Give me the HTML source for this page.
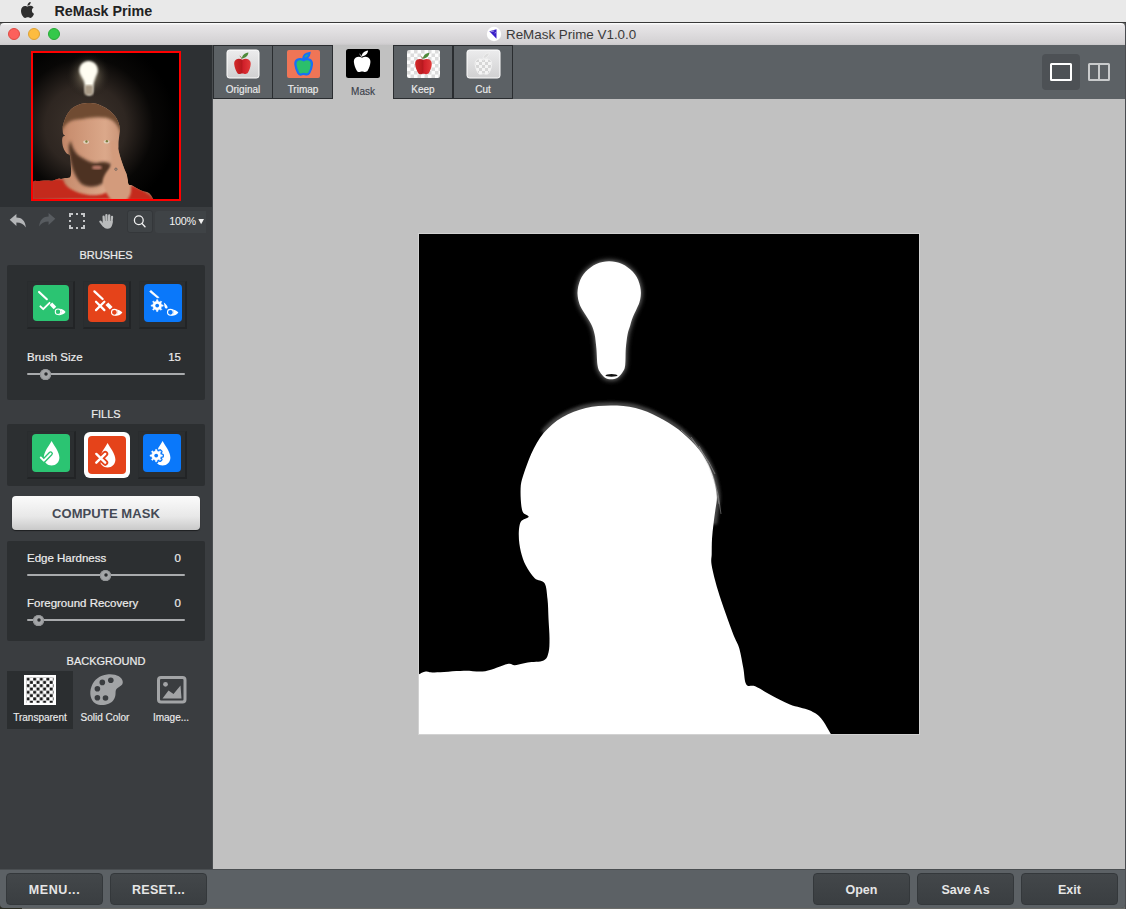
<!DOCTYPE html>
<html><head><meta charset="utf-8">
<style>
*{margin:0;padding:0;box-sizing:border-box}
html,body{width:1126px;height:909px;overflow:hidden;background:#6a6b68;font-family:"Liberation Sans",sans-serif}
.a{position:absolute}
.tl{width:12px;height:12px;border-radius:50%;top:28px}
.panel{background:#2c2f31;border-radius:2px}
.lbl{color:#ececec;font-size:11.5px;white-space:nowrap;line-height:14px;-webkit-text-stroke:0.2px #ececec}
.hdr{color:#ececec;font-size:11px;white-space:nowrap;text-align:center;line-height:14px;-webkit-text-stroke:0.2px #ececec}
.tab{top:46px;height:52px;background:#5c6165}
.tabl{top:83px;text-align:center;font-size:10px;color:#ececec;line-height:13px;-webkit-text-stroke:0.15px currentColor}
.frame{background:#2b2e30;border:1px solid #292c2e;border-right:2px solid #222426;border-bottom:2px solid #222426}
.track{height:2px;background:#a9abad;border-radius:1px}
.knob{width:11px;height:11px;border-radius:50%;background:#a4a6a8;box-shadow:inset 0 0 0 1px #939597}
.knob::after{content:"";position:absolute;left:3.5px;top:3.5px;width:4px;height:4px;border-radius:50%;background:radial-gradient(circle,#2a2c2e 0,#2a2c2e 1.2px,#7f8183 2px)}
.bgl{top:711px;text-align:center;font-size:10px;color:#ececec;line-height:13px;-webkit-text-stroke:0.15px #ececec}
.bbtn{background:linear-gradient(#43474a,#3a3e41);border-radius:4px;border:1px solid #34383b;color:#e6e6e6;font-weight:bold;font-size:12.5px;text-align:center;line-height:32px}
</style></head><body>
<div class="a" style="left:0;top:896px;width:22px;height:13px;background:#2b2c22"></div>
<div class="a" style="left:1125px;top:23px;width:1px;height:886px;background:#4a4c50"></div>
<!-- menubar -->
<div class="a" style="left:0;top:0;width:1126px;height:22px;background:#e9e9e9"></div>
<svg class="a" style="left:21px;top:2px" width="13" height="16" viewBox="0 0 814 1000"><path d="M788.1 340.9c-5.8 4.5-108.2 62.2-108.2 190.5 0 148.4 130.3 200.9 134.2 202.2-.6 3.2-20.7 71.9-68.7 141.9-42.8 61.6-87.5 123.1-155.5 123.1s-85.5-39.5-164-39.5c-76.5 0-103.7 40.8-165.9 40.8s-105.6-57-155.5-127C46.7 790.7 0 663 0 541.8c0-194.4 126.4-297.5 250.8-297.5 66.1 0 121.2 43.4 162.7 43.4 39.5 0 101.1-46 176.3-46 28.5 0 130.9 2.6 198.3 99.2zm-234-181.5c31.1-36.9 53.1-88.1 53.1-139.3 0-7.1-.6-14.3-1.9-20.1-50.6 1.9-110.8 33.7-147.1 75.8-28.5 32.4-55.1 83.6-55.1 135.5 0 7.8 1.3 15.6 1.9 18.1 3.2.6 8.4 1.3 13.6 1.3 45.4 0 102.5-30.4 135.5-71.3z" fill="#2e2e2e"/></svg>
<div class="a" style="left:54.5px;top:3px;font-weight:bold;font-size:14.3px;color:#222;line-height:17px">ReMask Prime</div>
<div class="a" style="left:0;top:22px;width:1126px;height:1px;background:#383838"></div>
<!-- window -->
<div class="a" style="left:0;top:23px;width:1125px;height:885px;background:#3a3d40;border-radius:4px 4px 4px 4px"></div>
<div class="a" style="left:0;top:23px;width:1125px;height:22px;background:linear-gradient(#fbfbfb 0,#fbfbfb 1px,#e8e6e8 2px,#d3d1d3 20px,#c9c7c9 22px);border-radius:4px 4px 0 0"></div>
<div class="a tl" style="left:8px;background:#fc605c;border:1px solid #de4a43"></div>
<div class="a tl" style="left:28px;background:#fdbc40;border:1px solid #dea134"></div>
<div class="a tl" style="left:48px;background:#34c84a;border:1px solid #27aa35"></div>
<svg class="a" style="left:486px;top:26px" width="16" height="16" viewBox="0 0 16 16"><circle cx="8" cy="8" r="7.2" fill="#fff"/><path d="M3.3,5.3 L10.5,3.3 L10.5,12.7Z" fill="#3a1fc8"/><path d="M4.5,5.6 L8.2,5.0 M8.6,7.2 L10,6.4" stroke="#fff" stroke-width="0.7" opacity="0.7"/></svg>
<div class="a" style="left:506px;top:26px;font-size:13.4px;color:#3a3a3a;line-height:17px">ReMask Prime V1.0.0</div>
<!-- sidebar -->
<div class="a" style="left:0;top:45px;width:212px;height:162px;background:#2d3033"></div>
<div class="a" style="left:212px;top:45px;width:1px;height:824px;background:#4a4d50"></div>
<!-- tabbar -->
<div class="a" style="left:213px;top:45px;width:912px;height:54px;background:#5c6165"></div>
<!--TABS-->
<svg width="0" height="0" style="position:absolute"><defs>
<linearGradient id="appleg" x1="0" x2="1" y1="0" y2="0"><stop offset="0" stop-color="#d42a2a"/><stop offset="0.45" stop-color="#b81a1f"/><stop offset="0.55" stop-color="#d0202a"/><stop offset="1" stop-color="#e23a3a"/></linearGradient>
<linearGradient id="iconbg" x1="0" x2="0" y1="0" y2="1"><stop offset="0" stop-color="#ececed"/><stop offset="1" stop-color="#d0d0d1"/></linearGradient>
<pattern id="chk" width="7" height="7" patternUnits="userSpaceOnUse" x="1" y="1"><rect width="7" height="7" fill="#fdfdfd"/><rect width="3.5" height="3.5" fill="#dcdcdc"/><rect x="3.5" y="3.5" width="3.5" height="3.5" fill="#dcdcdc"/></pattern>
<pattern id="chk2" width="6" height="6" patternUnits="userSpaceOnUse"><rect width="6" height="6" fill="#f6f6f6"/><rect width="3" height="3" fill="#d6d6d6"/><rect x="3" y="3" width="3" height="3" fill="#d6d6d6"/></pattern>
</defs></svg>
<div class="a" style="left:213px;top:45px;width:300px;height:54px;background:#2a2d30"></div>
<div class="a tab" style="left:214px;width:58px"></div>
<div class="a tab" style="left:273px;width:59px"></div>
<div class="a" style="left:333px;top:45px;width:60px;height:54px;background:#c1c1c1"></div>
<div class="a tab" style="left:394px;width:58px"></div>
<div class="a tab" style="left:454px;width:58px"></div>
<svg class="a" style="left:226px;top:49px" width="34" height="30" viewBox="0 0 34 30">
 <rect x="1" y="1" width="32" height="28" rx="2.5" fill="url(#iconbg)" stroke="#fff" stroke-width="1"/>
 <path d="M16.3,10C14.5,8.8 12,8.6 10.2,9.6C8.5,10.6 8,12.5 8.2,14.5C8.5,17.5 9.8,20.5 11,22.8C11.8,24.4 13.5,24.5 14.8,24C15.8,23.6 17,23.6 18,24C19.5,24.5 21.2,24.3 22,22.8C23.3,20.5 24.5,17.5 24.7,14.5C24.9,12.5 24.2,10.6 22.5,9.6C20.7,8.6 18.2,8.8 16.3,10Z" fill="url(#appleg)" transform="translate(0,0.8)"/>
 <path d="M15.9,8.6C16.1,5.6 18.6,3.1 22.4,2.7C22.1,5.9 19.6,8.4 15.9,8.6Z" fill="#4f8a3a" transform="translate(0,0.8)"/><path d="M15.9,9.4C15.7,8 15,7 13.8,6.3" stroke="#8a6a40" stroke-width="0.9" fill="none" transform="translate(0,0.8)"/>
</svg>
<svg class="a" style="left:286px;top:49px" width="35" height="30" viewBox="0 0 35 30">
 <rect x="1" y="1" width="33" height="28" rx="2" fill="#f07556"/>
 <path d="M16.3,10C14.5,8.8 12,8.6 10.2,9.6C8.5,10.6 8,12.5 8.2,14.5C8.5,17.5 9.8,20.5 11,22.8C11.8,24.4 13.5,24.5 14.8,24C15.8,23.6 17,23.6 18,24C19.5,24.5 21.2,24.3 22,22.8C23.3,20.5 24.5,17.5 24.7,14.5C24.9,12.5 24.2,10.6 22.5,9.6C20.7,8.6 18.2,8.8 16.3,10Z" fill="#2bbf6c" stroke="#1770f5" stroke-width="2.2" transform="translate(1.2,1.2)"/>
 <path d="M15.9,8.6C16.1,5.6 18.6,3.1 22.4,2.7C22.1,5.9 19.6,8.4 15.9,8.6Z" fill="#2bbf6c" stroke="#1770f5" stroke-width="2" transform="translate(1.2,1.2)"/>
</svg>
<svg class="a" style="left:346px;top:49px" width="34" height="29" viewBox="0 0 34 29">
 <rect x="0" y="0" width="34" height="29" rx="2.5" fill="#000"/>
 <path d="M16.3,10C14.5,8.8 12,8.6 10.2,9.6C8.5,10.6 8,12.5 8.2,14.5C8.5,17.5 9.8,20.5 11,22.8C11.8,24.4 13.5,24.5 14.8,24C15.8,23.6 17,23.6 18,24C19.5,24.5 21.2,24.3 22,22.8C23.3,20.5 24.5,17.5 24.7,14.5C24.9,12.5 24.2,10.6 22.5,9.6C20.7,8.6 18.2,8.8 16.3,10Z" fill="#fff" transform="translate(-0.3,-1.2)"/>
 <path d="M15.9,8.6C16.1,5.6 18.6,3.1 22.4,2.7C22.1,5.9 19.6,8.4 15.9,8.6Z" fill="#fff" transform="translate(-0.3,-1.2)"/><path d="M15.9,9.4C15.7,8 15,7 13.8,6.3" stroke="#ddd" stroke-width="0.9" fill="none" transform="translate(-0.3,-1.2)"/>
</svg>
<svg class="a" style="left:406px;top:49px" width="35" height="30" viewBox="0 0 35 30">
 <rect x="1" y="1" width="33" height="28" rx="2" fill="url(#chk)"/>
 <path d="M16.3,10C14.5,8.8 12,8.6 10.2,9.6C8.5,10.6 8,12.5 8.2,14.5C8.5,17.5 9.8,20.5 11,22.8C11.8,24.4 13.5,24.5 14.8,24C15.8,23.6 17,23.6 18,24C19.5,24.5 21.2,24.3 22,22.8C23.3,20.5 24.5,17.5 24.7,14.5C24.9,12.5 24.2,10.6 22.5,9.6C20.7,8.6 18.2,8.8 16.3,10Z" fill="url(#appleg)" transform="translate(1,1)"/>
 <path d="M15.9,8.6C16.1,5.6 18.6,3.1 22.4,2.7C22.1,5.9 19.6,8.4 15.9,8.6Z" fill="#4f8a3a" transform="translate(1,1)"/><path d="M15.9,9.4C15.7,8 15,7 13.8,6.3" stroke="#8a6a40" stroke-width="0.9" fill="none" transform="translate(1,1)"/>
</svg>
<svg class="a" style="left:466px;top:49px" width="35" height="30" viewBox="0 0 35 30">
 <rect x="1" y="1" width="33" height="28" rx="2.5" fill="url(#iconbg)" stroke="#fff" stroke-width="1"/>
 <path d="M16.3,10C14.5,8.8 12,8.6 10.2,9.6C8.5,10.6 8,12.5 8.2,14.5C8.5,17.5 9.8,20.5 11,22.8C11.8,24.4 13.5,24.5 14.8,24C15.8,23.6 17,23.6 18,24C19.5,24.5 21.2,24.3 22,22.8C23.3,20.5 24.5,17.5 24.7,14.5C24.9,12.5 24.2,10.6 22.5,9.6C20.7,8.6 18.2,8.8 16.3,10Z" fill="url(#chk2)" stroke="#f4f4f4" stroke-width="0.9" opacity="0.95" transform="translate(1,1)"/>
 <path d="M15.9,8.6C16.1,5.6 18.6,3.1 22.4,2.7C22.1,5.9 19.6,8.4 15.9,8.6Z" fill="#dedede" stroke="#f2f2f2" stroke-width="0.8" transform="translate(1,1)"/>
</svg>
<div class="a tabl" style="left:213px;width:60px">Original</div>
<div class="a tabl" style="left:273px;width:60px">Trimap</div>
<div class="a tabl" style="left:333px;width:60px;color:#3a404a;top:85px">Mask</div>
<div class="a tabl" style="left:393px;width:60px">Keep</div>
<div class="a tabl" style="left:453px;width:60px">Cut</div>
<!-- view toggles -->
<div class="a" style="left:1042px;top:54px;width:38px;height:36px;border-radius:4px;background:#4d5155"></div>
<div class="a" style="left:1050px;top:63px;width:22px;height:18px;border:2px solid #fff;border-radius:1.5px"></div>
<div class="a" style="left:1088px;top:63px;width:22px;height:18px;border:2px solid #c9cbcc;border-radius:1.5px"></div>
<div class="a" style="left:1098px;top:64px;width:2px;height:16px;background:#c9cbcc"></div>
<!--/TABS-->
<!-- canvas -->
<div class="a" style="left:213px;top:99px;width:912px;height:770px;background:#c1c1c1"></div>
<div class="a" style="left:418px;top:233px;width:502px;height:502px;background:#d2d2d2"></div>
<!--MASK-->
<svg class="a" style="left:419px;top:234px" width="500" height="500" viewBox="0 0 500 500">
<defs><filter id="soft" x="-5%" y="-5%" width="110%" height="110%"><feGaussianBlur stdDeviation="0.6"/></filter>
<filter id="glow" x="-30%" y="-30%" width="160%" height="160%"><feGaussianBlur stdDeviation="2.5"/></filter>
<filter id="hb" x="-10%" y="-10%" width="120%" height="120%"><feGaussianBlur stdDeviation="1.5"/></filter></defs>
<rect width="500" height="500" fill="#000"/>
<path d="M162.7,74.8C161.4,72.4 160.7,70.9 160.1,68.8C159.4,66.7 158.9,64.5 158.7,62.3C158.4,60.1 158.4,57.9 158.7,55.7C158.9,53.5 159.4,51.3 160.1,49.2C160.7,47.1 161.6,45.1 162.7,43.1C163.8,41.2 165.2,39.4 166.6,37.8C168.1,36.2 169.8,34.6 171.6,33.4C173.3,32.1 175.3,30.9 177.3,30.0C179.3,29.1 181.5,28.4 183.6,28.0C185.8,27.5 188.0,27.3 190.2,27.3C192.4,27.3 194.6,27.5 196.8,28.0C198.9,28.4 201.1,29.1 203.1,30.0C205.1,30.9 207.1,32.1 208.8,33.4C210.6,34.6 212.3,36.2 213.8,37.8C215.2,39.4 216.6,41.2 217.7,43.1C218.8,45.1 219.7,47.1 220.3,49.2C221.0,51.3 221.5,53.5 221.7,55.7C222.0,57.9 222.0,60.1 221.7,62.3C221.5,64.5 221.0,66.7 220.3,68.8C219.7,70.9 218.8,72.3 217.7,74.8C216.5,77.4 214.6,81.2 213.5,84.0C212.4,86.8 212.0,88.8 211.2,91.5C210.4,94.2 209.3,96.5 208.6,100.3C207.9,104.1 207.2,109.5 206.8,114.6C206.4,119.7 206.7,127.2 206.2,131.0C205.7,134.8 205.3,135.4 204.0,137.5C202.7,139.6 200.5,142.5 198.5,143.8C196.5,145.1 194.1,145.3 192.0,145.3C189.9,145.3 187.9,145.1 186.0,143.8C184.1,142.6 182.1,139.9 180.8,137.8C179.6,135.7 179.1,134.9 178.5,131.0C177.9,127.1 177.9,119.7 177.4,114.6C176.9,109.5 176.4,104.1 175.6,100.3C174.8,96.5 174.0,94.3 172.8,91.5C171.6,88.7 169.9,86.3 168.2,83.5C166.5,80.7 164.1,77.3 162.7,74.8Z" fill="#777" stroke="#777" stroke-width="2" filter="url(#glow)"/>
<path d="M124.6,199.1C126.1,197.7 130.1,193.0 133.2,190.4C136.3,187.7 139.8,185.4 143.4,183.3C147.0,181.2 150.9,179.4 154.8,177.8C158.7,176.3 162.7,174.9 166.8,174.0C170.9,173.0 175.1,172.5 179.3,172.1C183.5,171.6 187.7,171.4 191.8,171.4C196.0,171.4 200.2,171.5 204.3,172.0C208.4,172.4 212.5,173.0 216.5,173.9C220.5,174.9 224.4,176.3 228.2,177.8C231.9,179.3 235.5,181.1 239.1,183.0C242.6,184.8 246.1,186.6 249.5,188.7C252.9,190.8 256.1,193.0 259.2,195.3C262.3,197.7 265.2,200.3 268.1,203.0C271.0,205.6 273.8,208.3 276.4,211.2C279.0,214.1 281.5,217.1 283.6,220.4C285.8,223.6 287.6,227.0 289.3,230.5C290.9,234.0 292.4,237.6 293.6,241.2C294.8,244.9 295.8,248.6 296.5,252.4C297.2,256.1 297.9,260.0 297.9,263.8C297.9,267.6 297.1,270.6 296.5,275.0C295.9,279.4 294.8,287.5 294.5,290.0" fill="none" stroke="#444" stroke-width="7" filter="url(#hb)"/>
<path d="M0.0,440.3C1.1,439.9 4.1,437.9 6.7,437.6C9.3,437.3 9.2,438.6 15.5,438.5C21.8,438.4 36.3,437.0 44.8,436.8C53.2,436.6 58.9,438.3 66.2,437.2C73.5,436.1 83.4,431.1 88.4,430.1C93.4,429.1 92.6,431.5 96.0,431.2C99.4,430.9 103.9,429.2 108.7,428.4C113.5,427.6 121.1,428.0 124.6,426.4C128.1,424.8 128.5,422.1 129.5,418.5C130.5,414.9 130.5,410.2 130.5,404.6C130.5,399.0 129.8,391.4 129.5,384.8C129.2,378.2 129.2,370.9 128.5,365.0C127.8,359.1 127.7,352.7 125.6,349.2C123.5,345.7 118.8,347.2 115.7,344.2C112.6,341.2 109.0,335.8 106.7,331.3C104.4,326.9 103.0,322.4 101.8,317.5C100.6,312.6 99.8,306.6 99.8,301.6C99.8,296.7 100.1,290.9 101.8,287.8C103.5,284.7 109.4,284.5 109.7,282.8C110.0,281.1 105.1,280.7 103.8,277.9C102.5,275.1 102.1,270.4 101.8,266.0C101.5,261.6 101.4,255.6 101.8,251.3C102.3,247.1 103.5,244.1 104.5,240.6C105.6,237.0 106.9,233.5 108.2,230.0C109.5,226.5 110.8,222.9 112.4,219.4C114.0,215.9 115.8,212.4 117.8,209.0C119.9,205.6 122.1,202.2 124.6,199.1C127.2,196.0 130.1,193.0 133.2,190.4C136.3,187.7 139.8,185.4 143.4,183.3C147.0,181.2 150.9,179.4 154.8,177.8C158.7,176.3 162.7,174.9 166.8,174.0C170.9,173.0 175.1,172.5 179.3,172.1C183.5,171.6 187.7,171.4 191.8,171.4C196.0,171.4 200.2,171.5 204.3,172.0C208.4,172.4 212.5,173.0 216.5,173.9C220.5,174.9 224.4,176.3 228.2,177.8C231.9,179.3 235.5,181.1 239.1,183.0C242.6,184.8 246.1,186.6 249.5,188.7C252.9,190.8 256.1,193.0 259.2,195.3C262.3,197.7 265.2,200.3 268.1,203.0C271.0,205.6 273.8,208.3 276.4,211.2C279.0,214.1 281.5,217.1 283.6,220.4C285.8,223.6 287.6,227.0 289.3,230.5C290.9,234.0 292.4,237.6 293.6,241.2C294.8,244.9 295.8,248.6 296.5,252.4C297.2,256.1 297.9,260.0 297.9,263.8C297.9,267.6 297.1,270.6 296.5,275.0C295.9,279.4 295.1,285.0 294.5,290.0C293.9,295.0 293.3,300.0 293.0,305.0C292.7,310.0 292.8,315.6 292.7,320.0C292.6,324.4 291.7,325.6 292.7,331.5C293.7,337.4 296.3,347.4 298.6,355.3C300.9,363.2 303.9,371.5 306.5,379.1C309.1,386.7 312.2,395.0 314.5,400.9C316.8,406.8 318.8,409.1 320.4,414.7C322.0,420.3 323.2,428.6 324.4,434.5C325.5,440.4 325.3,447.4 327.3,450.4C329.3,453.4 332.2,450.6 336.2,452.3C340.2,454.0 345.5,457.7 351.3,460.7C357.1,463.7 364.4,467.9 370.9,470.5C377.4,473.1 385.2,474.0 390.4,476.3C395.6,478.6 398.4,480.2 402.0,484.2C405.6,488.1 410.2,497.4 411.9,500.0L0,500Z" fill="#fff" filter="url(#soft)"/>
<path d="M162.7,74.8C161.4,72.4 160.7,70.9 160.1,68.8C159.4,66.7 158.9,64.5 158.7,62.3C158.4,60.1 158.4,57.9 158.7,55.7C158.9,53.5 159.4,51.3 160.1,49.2C160.7,47.1 161.6,45.1 162.7,43.1C163.8,41.2 165.2,39.4 166.6,37.8C168.1,36.2 169.8,34.6 171.6,33.4C173.3,32.1 175.3,30.9 177.3,30.0C179.3,29.1 181.5,28.4 183.6,28.0C185.8,27.5 188.0,27.3 190.2,27.3C192.4,27.3 194.6,27.5 196.8,28.0C198.9,28.4 201.1,29.1 203.1,30.0C205.1,30.9 207.1,32.1 208.8,33.4C210.6,34.6 212.3,36.2 213.8,37.8C215.2,39.4 216.6,41.2 217.7,43.1C218.8,45.1 219.7,47.1 220.3,49.2C221.0,51.3 221.5,53.5 221.7,55.7C222.0,57.9 222.0,60.1 221.7,62.3C221.5,64.5 221.0,66.7 220.3,68.8C219.7,70.9 218.8,72.3 217.7,74.8C216.5,77.4 214.6,81.2 213.5,84.0C212.4,86.8 212.0,88.8 211.2,91.5C210.4,94.2 209.3,96.5 208.6,100.3C207.9,104.1 207.2,109.5 206.8,114.6C206.4,119.7 206.7,127.2 206.2,131.0C205.7,134.8 205.3,135.4 204.0,137.5C202.7,139.6 200.5,142.5 198.5,143.8C196.5,145.1 194.1,145.3 192.0,145.3C189.9,145.3 187.9,145.1 186.0,143.8C184.1,142.6 182.1,139.9 180.8,137.8C179.6,135.7 179.1,134.9 178.5,131.0C177.9,127.1 177.9,119.7 177.4,114.6C176.9,109.5 176.4,104.1 175.6,100.3C174.8,96.5 174.0,94.3 172.8,91.5C171.6,88.7 169.9,86.3 168.2,83.5C166.5,80.7 164.1,77.3 162.7,74.8Z" fill="#fff" filter="url(#soft)"/>
<ellipse cx="192.5" cy="141.4" rx="6" ry="1.3" fill="#111"/>
<g fill="none" stroke="#cfcfcf" stroke-width="0.8" opacity="0.5"><path d="M272,203 Q294,230 300,270"/><path d="M280,212 Q298,240 302,280"/><path d="M262,196 Q285,215 296,240"/></g>
</svg>
<!--/MASK-->
<!-- bottom -->
<div class="a" style="left:0;top:869px;width:1125px;height:39px;background:#5c6165;border-top:1px solid #4a4e51;border-radius:0 0 4px 4px"></div>
<div class="a bbtn" style="left:6px;top:873px;width:97px;height:32px;letter-spacing:0.6px">MENU...</div>
<div class="a bbtn" style="left:110px;top:873px;width:97px;height:32px;letter-spacing:0.3px">RESET...</div>
<div class="a bbtn" style="left:813px;top:873px;width:97px;height:32px">Open</div>
<div class="a bbtn" style="left:917px;top:873px;width:97px;height:32px">Save As</div>
<div class="a bbtn" style="left:1021px;top:873px;width:97px;height:32px">Exit</div>
<!-- sidebar panels -->
<div class="a hdr" style="left:0;top:248px;width:212px">BRUSHES</div>
<div class="a panel" style="left:7px;top:265px;width:198px;height:135px"></div>
<div class="a hdr" style="left:0;top:407px;width:212px">FILLS</div>
<div class="a panel" style="left:7px;top:424px;width:198px;height:62px"></div>
<div class="a panel" style="left:7px;top:541px;width:198px;height:100px"></div>
<div class="a hdr" style="left:0;top:654px;width:212px">BACKGROUND</div>
<!--SIDE-->
<!-- toolbar -->

<svg class="a" style="left:8px;top:212px" width="20" height="18" viewBox="0 0 20 18">
 <path d="M1.7,7.8 L8.4,2 L8.4,5.6 C13.5,5.6 17.4,8.6 17.8,15.6 C15.8,12 12.8,10.4 8.4,10.4 L8.4,14 Z" fill="#b4b6b8"/>
</svg>
<svg class="a" style="left:37px;top:211px" width="20" height="18" viewBox="0 0 20 18">
 <g transform="translate(20,0) scale(-1,1)"><path d="M1.7,7.8 L8.4,2 L8.4,5.6 C13.5,5.6 17.4,8.6 17.8,15.6 C15.8,12 12.8,10.4 8.4,10.4 L8.4,14 Z" fill="#585c60"/></g>
</svg>
<svg class="a" style="left:68px;top:212px" width="18" height="18" viewBox="0 0 18 18">
 <g fill="#c4c6c8"><path d="M1,1 H5 V3 H3 V5 H1Z M17,1 H13 V3 H15 V5 H17Z M1,17 H5 V15 H3 V13 H1Z M17,17 H13 V15 H15 V13 H17Z"/>
 <rect x="8" y="1" width="2" height="2"/><rect x="8" y="15" width="2" height="2"/><rect x="1" y="8" width="2" height="2"/><rect x="15" y="8" width="2" height="2"/></g>
</svg>
<svg class="a" style="left:98px;top:212px" width="18" height="18" viewBox="0 0 18 18">
 <g stroke="#b9bbbc" stroke-width="2.3" stroke-linecap="round" fill="none"><path d="M5.6,4.6 L6,11"/><path d="M8.4,3.2 L8.5,10"/><path d="M11.2,3.5 L11,10"/><path d="M14,5 L13.4,11"/><path d="M2.4,9.6 L5.5,13.6"/></g>
 <path d="M4.8,9 L14.6,9 L14.3,12.5 C13.8,15.2 12,16.8 9.4,16.8 C7.2,16.8 5.8,15.6 4.8,13.8Z" fill="#b9bbbc"/>
</svg>
<div class="a" style="left:127px;top:210px;width:26px;height:23px;border-radius:3px;background:#3f4346;border:1px solid #34373a"></div>
<svg class="a" style="left:131px;top:213px" width="18" height="18" viewBox="0 0 18 18">
 <circle cx="7.8" cy="7.2" r="4.4" fill="none" stroke="#f2f2f2" stroke-width="1.3"/><path d="M10.9,10.4 L14,13.8" stroke="#f2f2f2" stroke-width="1.4" stroke-linecap="round"/>
</svg>
<div class="a" style="left:155px;top:211px;width:51px;height:22px;border-radius:3px 0 0 3px;background:#3f4346"></div>
<div class="a" style="left:155px;top:214px;width:41px;text-align:right;font-size:10.8px;color:#f4f4f4;line-height:14px;letter-spacing:-0.2px">100%</div>
<svg class="a" style="left:198px;top:218px" width="7" height="7" viewBox="0 0 7 7"><path d="M0.3,1 H6 L3.15,6.2Z" fill="#f0f0f0"/></svg>
<!-- thumbnail -->
<div class="a" style="left:31px;top:51px;width:150px;height:150px;background:#ff0000"></div>
<!--THUMB-->
<svg class="a" style="left:33px;top:53px" width="146" height="146" viewBox="0 0 500 500">
<defs>
<radialGradient id="tglow" cx="0.36" cy="0.5" r="0.62"><stop offset="0" stop-color="#3f352e"/><stop offset="0.45" stop-color="#2e2621"/><stop offset="0.75" stop-color="#080706"/><stop offset="1" stop-color="#000"/></radialGradient>
<radialGradient id="bglow" cx="0.5" cy="0.5" r="0.5"><stop offset="0" stop-color="#fffbe8" stop-opacity="0.9"/><stop offset="0.45" stop-color="#a89c80" stop-opacity="0.3"/><stop offset="1" stop-color="#000" stop-opacity="0"/></radialGradient>
<linearGradient id="skin" x1="0" x2="1" y1="0" y2="0"><stop offset="0" stop-color="#8a5440"/><stop offset="0.3" stop-color="#c98f70"/><stop offset="0.6" stop-color="#dba88a"/><stop offset="1" stop-color="#a86c50"/></linearGradient>
<clipPath id="headclip"><path d="M0.0,440.3C1.1,439.9 4.1,437.9 6.7,437.6C9.3,437.3 9.2,438.6 15.5,438.5C21.8,438.4 36.3,437.0 44.8,436.8C53.2,436.6 58.9,438.3 66.2,437.2C73.5,436.1 83.4,431.1 88.4,430.1C93.4,429.1 92.6,431.5 96.0,431.2C99.4,430.9 103.9,429.2 108.7,428.4C113.5,427.6 121.1,428.0 124.6,426.4C128.1,424.8 128.5,422.1 129.5,418.5C130.5,414.9 130.5,410.2 130.5,404.6C130.5,399.0 129.8,391.4 129.5,384.8C129.2,378.2 129.2,370.9 128.5,365.0C127.8,359.1 127.7,352.7 125.6,349.2C123.5,345.7 118.8,347.2 115.7,344.2C112.6,341.2 109.0,335.8 106.7,331.3C104.4,326.9 103.0,322.4 101.8,317.5C100.6,312.6 99.8,306.6 99.8,301.6C99.8,296.7 100.1,290.9 101.8,287.8C103.5,284.7 109.4,284.5 109.7,282.8C110.0,281.1 105.1,280.7 103.8,277.9C102.5,275.1 102.1,270.4 101.8,266.0C101.5,261.6 101.4,255.6 101.8,251.3C102.3,247.1 103.5,244.1 104.5,240.6C105.6,237.0 106.9,233.5 108.2,230.0C109.5,226.5 110.8,222.9 112.4,219.4C114.0,215.9 115.8,212.4 117.8,209.0C119.9,205.6 122.1,202.2 124.6,199.1C127.2,196.0 130.1,193.0 133.2,190.4C136.3,187.7 139.8,185.4 143.4,183.3C147.0,181.2 150.9,179.4 154.8,177.8C158.7,176.3 162.7,174.9 166.8,174.0C170.9,173.0 175.1,172.5 179.3,172.1C183.5,171.6 187.7,171.4 191.8,171.4C196.0,171.4 200.2,171.5 204.3,172.0C208.4,172.4 212.5,173.0 216.5,173.9C220.5,174.9 224.4,176.3 228.2,177.8C231.9,179.3 235.5,181.1 239.1,183.0C242.6,184.8 246.1,186.6 249.5,188.7C252.9,190.8 256.1,193.0 259.2,195.3C262.3,197.7 265.2,200.3 268.1,203.0C271.0,205.6 273.8,208.3 276.4,211.2C279.0,214.1 281.5,217.1 283.6,220.4C285.8,223.6 287.6,227.0 289.3,230.5C290.9,234.0 292.4,237.6 293.6,241.2C294.8,244.9 295.8,248.6 296.5,252.4C297.2,256.1 297.9,260.0 297.9,263.8C297.9,267.6 297.1,270.6 296.5,275.0C295.9,279.4 295.1,285.0 294.5,290.0C293.9,295.0 293.3,300.0 293.0,305.0C292.7,310.0 292.8,315.6 292.7,320.0C292.6,324.4 291.7,325.6 292.7,331.5C293.7,337.4 296.3,347.4 298.6,355.3C300.9,363.2 303.9,371.5 306.5,379.1C309.1,386.7 312.2,395.0 314.5,400.9C316.8,406.8 318.8,409.1 320.4,414.7C322.0,420.3 323.2,428.6 324.4,434.5C325.5,440.4 325.3,447.4 327.3,450.4C329.3,453.4 332.2,450.6 336.2,452.3C340.2,454.0 345.5,457.7 351.3,460.7C357.1,463.7 364.4,467.9 370.9,470.5C377.4,473.1 385.2,474.0 390.4,476.3C395.6,478.6 398.4,480.2 402.0,484.2C405.6,488.1 410.2,497.4 411.9,500.0L0,500Z"/></clipPath>
<filter id="tbl"><feGaussianBlur stdDeviation="3"/></filter>
<filter id="tbl5"><feGaussianBlur stdDeviation="5"/></filter>
</defs>
<rect width="500" height="500" fill="url(#tglow)"/>
<circle cx="190" cy="75" r="80" fill="url(#bglow)"/>
<path d="M162.7,74.8C161.4,72.4 160.7,70.9 160.1,68.8C159.4,66.7 158.9,64.5 158.7,62.3C158.4,60.1 158.4,57.9 158.7,55.7C158.9,53.5 159.4,51.3 160.1,49.2C160.7,47.1 161.6,45.1 162.7,43.1C163.8,41.2 165.2,39.4 166.6,37.8C168.1,36.2 169.8,34.6 171.6,33.4C173.3,32.1 175.3,30.9 177.3,30.0C179.3,29.1 181.5,28.4 183.6,28.0C185.8,27.5 188.0,27.3 190.2,27.3C192.4,27.3 194.6,27.5 196.8,28.0C198.9,28.4 201.1,29.1 203.1,30.0C205.1,30.9 207.1,32.1 208.8,33.4C210.6,34.6 212.3,36.2 213.8,37.8C215.2,39.4 216.6,41.2 217.7,43.1C218.8,45.1 219.7,47.1 220.3,49.2C221.0,51.3 221.5,53.5 221.7,55.7C222.0,57.9 222.0,60.1 221.7,62.3C221.5,64.5 221.0,66.7 220.3,68.8C219.7,70.9 218.8,72.3 217.7,74.8C216.5,77.4 214.6,81.2 213.5,84.0C212.4,86.8 212.0,88.8 211.2,91.5C210.4,94.2 209.3,96.5 208.6,100.3C207.9,104.1 207.2,109.5 206.8,114.6C206.4,119.7 206.7,127.2 206.2,131.0C205.7,134.8 205.3,135.4 204.0,137.5C202.7,139.6 200.5,142.5 198.5,143.8C196.5,145.1 194.1,145.3 192.0,145.3C189.9,145.3 187.9,145.1 186.0,143.8C184.1,142.6 182.1,139.9 180.8,137.8C179.6,135.7 179.1,134.9 178.5,131.0C177.9,127.1 177.9,119.7 177.4,114.6C176.9,109.5 176.4,104.1 175.6,100.3C174.8,96.5 174.0,94.3 172.8,91.5C171.6,88.7 169.9,86.3 168.2,83.5C166.5,80.7 164.1,77.3 162.7,74.8Z" fill="#fffdf2" filter="url(#tbl)"/>
<rect x="177" y="110" width="29" height="34" rx="6" fill="#a89a86" filter="url(#tbl)"/>
<path d="M0.0,440.3C1.1,439.9 4.1,437.9 6.7,437.6C9.3,437.3 9.2,438.6 15.5,438.5C21.8,438.4 36.3,437.0 44.8,436.8C53.2,436.6 58.9,438.3 66.2,437.2C73.5,436.1 83.4,431.1 88.4,430.1C93.4,429.1 92.6,431.5 96.0,431.2C99.4,430.9 103.9,429.2 108.7,428.4C113.5,427.6 121.1,428.0 124.6,426.4C128.1,424.8 128.5,422.1 129.5,418.5C130.5,414.9 130.5,410.2 130.5,404.6C130.5,399.0 129.8,391.4 129.5,384.8C129.2,378.2 129.2,370.9 128.5,365.0C127.8,359.1 127.7,352.7 125.6,349.2C123.5,345.7 118.8,347.2 115.7,344.2C112.6,341.2 109.0,335.8 106.7,331.3C104.4,326.9 103.0,322.4 101.8,317.5C100.6,312.6 99.8,306.6 99.8,301.6C99.8,296.7 100.1,290.9 101.8,287.8C103.5,284.7 109.4,284.5 109.7,282.8C110.0,281.1 105.1,280.7 103.8,277.9C102.5,275.1 102.1,270.4 101.8,266.0C101.5,261.6 101.4,255.6 101.8,251.3C102.3,247.1 103.5,244.1 104.5,240.6C105.6,237.0 106.9,233.5 108.2,230.0C109.5,226.5 110.8,222.9 112.4,219.4C114.0,215.9 115.8,212.4 117.8,209.0C119.9,205.6 122.1,202.2 124.6,199.1C127.2,196.0 130.1,193.0 133.2,190.4C136.3,187.7 139.8,185.4 143.4,183.3C147.0,181.2 150.9,179.4 154.8,177.8C158.7,176.3 162.7,174.9 166.8,174.0C170.9,173.0 175.1,172.5 179.3,172.1C183.5,171.6 187.7,171.4 191.8,171.4C196.0,171.4 200.2,171.5 204.3,172.0C208.4,172.4 212.5,173.0 216.5,173.9C220.5,174.9 224.4,176.3 228.2,177.8C231.9,179.3 235.5,181.1 239.1,183.0C242.6,184.8 246.1,186.6 249.5,188.7C252.9,190.8 256.1,193.0 259.2,195.3C262.3,197.7 265.2,200.3 268.1,203.0C271.0,205.6 273.8,208.3 276.4,211.2C279.0,214.1 281.5,217.1 283.6,220.4C285.8,223.6 287.6,227.0 289.3,230.5C290.9,234.0 292.4,237.6 293.6,241.2C294.8,244.9 295.8,248.6 296.5,252.4C297.2,256.1 297.9,260.0 297.9,263.8C297.9,267.6 297.1,270.6 296.5,275.0C295.9,279.4 295.1,285.0 294.5,290.0C293.9,295.0 293.3,300.0 293.0,305.0C292.7,310.0 292.8,315.6 292.7,320.0C292.6,324.4 291.7,325.6 292.7,331.5C293.7,337.4 296.3,347.4 298.6,355.3C300.9,363.2 303.9,371.5 306.5,379.1C309.1,386.7 312.2,395.0 314.5,400.9C316.8,406.8 318.8,409.1 320.4,414.7C322.0,420.3 323.2,428.6 324.4,434.5C325.5,440.4 325.3,447.4 327.3,450.4C329.3,453.4 332.2,450.6 336.2,452.3C340.2,454.0 345.5,457.7 351.3,460.7C357.1,463.7 364.4,467.9 370.9,470.5C377.4,473.1 385.2,474.0 390.4,476.3C395.6,478.6 398.4,480.2 402.0,484.2C405.6,488.1 410.2,497.4 411.9,500.0L0,500Z" fill="url(#skin)"/>
<g clip-path="url(#headclip)">
 <path d="M85,320 C92,260 112,232 150,228 C185,224 215,216 250,222 C280,228 295,250 305,290 L320,150 L80,150Z" fill="#6f4b32" filter="url(#tbl5)"/>
 <path d="M122,320 C126,380 140,420 165,448 C185,462 215,462 240,445 C258,425 265,400 266,380 C250,372 235,372 222,376 C205,380 190,372 170,360 C150,350 138,335 128,300Z" fill="#4e3324" filter="url(#tbl5)"/>
 <ellipse cx="219" cy="392" rx="17" ry="7" fill="#b97868" filter="url(#tbl)"/>
 <path d="M0,432 C50,428 90,430 104,434 C108,460 140,478 190,486 C225,490 250,482 262,470 L280,500 L0,500Z" fill="#c42a1e" filter="url(#tbl)"/>
 <path d="M270,300 C285,300 295,330 305,368 C318,405 332,440 338,460 C345,480 344,495 340,505 L270,505 C255,490 245,470 240,445 C236,430 250,405 268,390 C275,380 272,365 270,345 C268,330 262,305 270,300Z" fill="#d39b7c" filter="url(#tbl)"/>
 <path d="M336,455 C360,462 390,475 420,505 L320,505 C332,495 338,480 336,455Z" fill="#c42a1e" filter="url(#tbl)"/>
</g>
<ellipse cx="182" cy="305" rx="10" ry="6" fill="#e0d2bc"/><ellipse cx="252" cy="304" rx="10" ry="6" fill="#e0d2bc"/>
<circle cx="183" cy="303" r="4" fill="#7a7a3a"/><circle cx="253" cy="302" r="4" fill="#7a7a3a"/>
<circle cx="284" cy="398" r="4" fill="none" stroke="#555" stroke-width="2.5"/>
</svg>
<!--/THUMB-->
<!-- brushes -->
<div class="a frame" style="left:27px;top:281px;width:48px;height:48px"></div>
<div class="a frame" style="left:83px;top:281px;width:48px;height:48px"></div>
<div class="a frame" style="left:139px;top:281px;width:48px;height:48px"></div>
<svg class="a" style="left:33px;top:285px" width="36" height="36" viewBox="0 0 38 38">
<rect width="38" height="38" rx="4" fill="#2bc472"/>
<path d="M6.4,7.4 L14.6,15" stroke="#fff" stroke-width="2.3" stroke-linecap="round"/>
<path d="M18.9,19.7 L23.2,24.3" stroke="#fff" stroke-width="3.8"/>
<circle cx="26.4" cy="28.3" r="2.9" fill="none" stroke="#fff" stroke-width="1.1"/>
<path d="M27.6,25.2 C31,25.4 33.2,27 34.4,28.6 C32.2,31.6 29.2,32.2 26.4,31.6 C28.6,31 29.9,29.6 29.9,28.2 C29.9,26.9 29,25.8 27.6,25.2Z" fill="#fff"/>
<path d="M7.8,22.5 L10.8,25.5 L17.5,18.8" fill="none" stroke="#fff" stroke-width="2" stroke-linecap="round" stroke-linejoin="round"/>
</svg>
<svg class="a" style="left:88px;top:284px" width="38" height="38" viewBox="0 0 38 38">
<rect width="38" height="38" rx="4" fill="#e5431a"/>
<path d="M6.4,7.4 L14.6,15" stroke="#fff" stroke-width="2.3" stroke-linecap="round"/>
<path d="M18.9,19.7 L23.2,24.3" stroke="#fff" stroke-width="3.8"/>
<circle cx="26.4" cy="28.3" r="2.9" fill="none" stroke="#fff" stroke-width="1.1"/>
<path d="M27.6,25.2 C31,25.4 33.2,27 34.4,28.6 C32.2,31.6 29.2,32.2 26.4,31.6 C28.6,31 29.9,29.6 29.9,28.2 C29.9,26.9 29,25.8 27.6,25.2Z" fill="#fff"/>
<path d="M8,17.7 L16.4,26.1 M16.4,17.7 L8,26.1" stroke="#fff" stroke-width="2.2" stroke-linecap="round"/><circle cx="14.8" cy="19.6" r="2.6" fill="none" stroke="COL" stroke-width="0"/>
</svg>
<svg class="a" style="left:144px;top:284px" width="38" height="38" viewBox="0 0 38 38">
<rect width="38" height="38" rx="4" fill="#0a78fa"/>
<path d="M5.6,7.7 L6.9,6.3 L15.2,13.6 L13.2,13.9 Z" fill="#fff" stroke="#fff" stroke-width="0.5" stroke-linejoin="round"/>
<path d="M19.8,18.4 C21.5,19.6 23.4,21.5 23.6,23.2 C23.6,24.4 22.4,25 21.4,24.2 C20.2,23 20.6,21.4 19.8,18.4Z" fill="#fff"/>
<circle cx="26.4" cy="28.3" r="2.9" fill="none" stroke="#fff" stroke-width="1.1"/>
<path d="M27.6,25.2 C31,25.4 33.2,27 34.4,28.6 C32.2,31.6 29.2,32.2 26.4,31.6 C28.6,31 29.9,29.6 29.9,28.2 C29.9,26.9 29,25.8 27.6,25.2Z" fill="#fff"/>
<path d="M12.43,17.17 L12.59,15.63 L13.81,15.63 L13.97,17.17 L15.79,17.92 L16.99,16.95 L17.85,17.81 L16.88,19.01 L17.63,20.83 L19.17,20.99 L19.17,22.21 L17.63,22.37 L16.88,24.19 L17.85,25.39 L16.99,26.25 L15.79,25.28 L13.97,26.03 L13.81,27.57 L12.59,27.57 L12.43,26.03 L10.61,25.28 L9.41,26.25 L8.55,25.39 L9.52,24.19 L8.77,22.37 L7.23,22.21 L7.23,20.99 L8.77,20.83 L9.52,19.01 L8.55,17.81 L9.41,16.95 L10.61,17.92Z" fill="#fff" stroke="#fff" stroke-width="0.5" stroke-linejoin="round"/><circle cx="13.2" cy="21.6" r="1.9" fill="#0a78fa"/>
</svg>
<div class="a lbl" style="left:27px;top:350px">Brush Size</div>
<div class="a lbl" style="left:160px;top:350px;width:21px;text-align:right">15</div>
<div class="a track" style="left:27px;top:373px;width:158px"></div>
<div class="a knob" style="left:40px;top:368.5px"></div>
<!-- fills -->
<div class="a frame" style="left:27px;top:431px;width:49px;height:48px"></div>
<div class="a frame" style="left:138px;top:431px;width:49px;height:48px"></div>
<svg class="a" style="left:32px;top:434px" width="38" height="38" viewBox="0 0 38 38">
<rect width="38" height="38" rx="4" fill="#2bc472"/><path d="M19.6,7.1 C22,11.5 27.4,18 27.4,23.8 C27.4,28.3 23.9,31.5 19.6,31.5 C15.3,31.5 11.8,28.3 11.8,23.8 C11.8,18 17.2,11.5 19.6,7.1Z" fill="#fff"/><path d="M8.8,23.5 L11.8,26.6 L18.6,19.6" fill="none" stroke="#2bc472" stroke-width="4.6" stroke-linecap="round" stroke-linejoin="round"/><path d="M8.8,23.5 L11.8,26.6 L18.6,19.6" fill="none" stroke="#fff" stroke-width="2" stroke-linecap="round" stroke-linejoin="round"/></svg>
<div class="a" style="left:84px;top:432px;width:46px;height:46px;border-radius:6px;background:#fff"></div>
<svg class="a" style="left:88px;top:436px" width="38" height="38" viewBox="0 0 38 38">
<rect width="38" height="38" rx="4" fill="#e5431a"/><path d="M19.6,7.1 C22,11.5 27.4,18 27.4,23.8 C27.4,28.3 23.9,31.5 19.6,31.5 C15.3,31.5 11.8,28.3 11.8,23.8 C11.8,18 17.2,11.5 19.6,7.1Z" fill="#fff"/><path d="M8.3,17.9 L17.2,26.7 M17.2,17.9 L8.3,26.7" stroke="#e5431a" stroke-width="6" stroke-linecap="round"/><path d="M8.3,17.9 L17.2,26.7 M17.2,17.9 L8.3,26.7" stroke="#fff" stroke-width="2.4" stroke-linecap="round"/></svg>
<svg class="a" style="left:143px;top:434px" width="38" height="38" viewBox="0 0 38 38">
<rect width="38" height="38" rx="4" fill="#0a78fa"/><path d="M19.6,7.1 C22,11.5 27.4,18 27.4,23.8 C27.4,28.3 23.9,31.5 19.6,31.5 C15.3,31.5 11.8,28.3 11.8,23.8 C11.8,18 17.2,11.5 19.6,7.1Z" fill="#fff"/><path d="M12.41,17.07 L12.57,15.43 L13.83,15.43 L13.99,17.07 L15.85,17.84 L17.11,16.79 L18.01,17.69 L16.96,18.95 L17.73,20.81 L19.37,20.97 L19.37,22.23 L17.73,22.39 L16.96,24.25 L18.01,25.51 L17.11,26.41 L15.85,25.36 L13.99,26.13 L13.83,27.77 L12.57,27.77 L12.41,26.13 L10.55,25.36 L9.29,26.41 L8.39,25.51 L9.44,24.25 L8.67,22.39 L7.03,22.23 L7.03,20.97 L8.67,20.81 L9.44,18.95 L8.39,17.69 L9.29,16.79 L10.55,17.84Z" fill="#0a78fa" stroke="#0a78fa" stroke-width="3.2" stroke-linejoin="round"/><path d="M12.41,17.07 L12.57,15.43 L13.83,15.43 L13.99,17.07 L15.85,17.84 L17.11,16.79 L18.01,17.69 L16.96,18.95 L17.73,20.81 L19.37,20.97 L19.37,22.23 L17.73,22.39 L16.96,24.25 L18.01,25.51 L17.11,26.41 L15.85,25.36 L13.99,26.13 L13.83,27.77 L12.57,27.77 L12.41,26.13 L10.55,25.36 L9.29,26.41 L8.39,25.51 L9.44,24.25 L8.67,22.39 L7.03,22.23 L7.03,20.97 L8.67,20.81 L9.44,18.95 L8.39,17.69 L9.29,16.79 L10.55,17.84Z" fill="#fff" stroke="#fff" stroke-width="0.5" stroke-linejoin="round"/><circle cx="13.2" cy="21.6" r="1.9" fill="#0a78fa"/></svg>
<!-- compute -->
<div class="a" style="left:12px;top:496px;width:188px;height:34px;border-radius:4px;background:linear-gradient(#fbfbfb,#e8e8e8 60%,#c9c9c9);box-shadow:0 1px 1px rgba(0,0,0,.5)"></div>
<div class="a" style="left:12px;top:506px;width:188px;text-align:center;font-weight:bold;font-size:13px;color:#454a55;line-height:16px;letter-spacing:0.1px">COMPUTE MASK</div>
<!-- sliders -->
<div class="a lbl" style="left:27px;top:551px">Edge Hardness</div>
<div class="a lbl" style="left:160px;top:551px;width:21px;text-align:right">0</div>
<div class="a track" style="left:27px;top:574px;width:158px"></div>
<div class="a knob" style="left:100px;top:569.5px"></div>
<div class="a lbl" style="left:27px;top:596px">Foreground Recovery</div>
<div class="a lbl" style="left:160px;top:596px;width:21px;text-align:right">0</div>
<div class="a track" style="left:27px;top:619px;width:158px"></div>
<div class="a knob" style="left:33px;top:614.5px"></div>
<!-- background -->
<div class="a" style="left:7px;top:671px;width:66px;height:58px;background:#2b2e30"></div>
<svg class="a" style="left:24px;top:675px" width="32" height="30" viewBox="0 0 32 30">
 <defs><pattern id="tchk" width="6.6" height="6.6" patternUnits="userSpaceOnUse" x="2.4" y="2.4"><rect width="6.6" height="6.6" fill="#fff"/><rect x="0.2" y="0.2" width="2.95" height="2.95" fill="#161616"/><rect x="3.5" y="3.5" width="2.95" height="2.95" fill="#161616"/></pattern>
 <filter id="tb"><feGaussianBlur stdDeviation="0.45"/></filter></defs>
 <rect x="0" y="0" width="32" height="30" fill="#fff"/>
 <rect x="2.4" y="2.4" width="27.2" height="25.4" fill="url(#tchk)" filter="url(#tb)"/>
</svg>
<svg class="a" style="left:89px;top:673px" width="35" height="34" viewBox="0 0 35 34">
 <path d="M18,1.5 C26,0.5 33.5,3.5 33.8,9 C34,13 29.5,13.5 27.5,16 C25.5,18.5 28,22 24.5,27 C21,32 12,33.5 6.5,30.5 C1.5,27.5 0,20 2.5,13.5 C5,6.5 11,2.4 18,1.5Z" fill="#a2a4a6"/>
 <g fill="#3a3d40"><circle cx="13.3" cy="9.4" r="2.8"/><circle cx="21.8" cy="7.3" r="2.8"/><circle cx="8.4" cy="15.8" r="2.8"/><circle cx="8.4" cy="24.8" r="2.8"/><circle cx="16.5" cy="25" r="2.8"/></g>
</svg>
<svg class="a" style="left:156px;top:675px" width="32" height="30" viewBox="0 0 32 30">
 <rect x="2.5" y="2.5" width="26.5" height="24.5" rx="2.5" fill="none" stroke="#a2a4a6" stroke-width="3"/>
 <circle cx="9.5" cy="9.3" r="2.4" fill="#a2a4a6"/>
 <path d="M6.5,23.5 L12.5,15.5 L17.5,19 L24.5,10.5 L25.5,23.5Z" fill="#a2a4a6"/>
</svg>
<div class="a bgl" style="left:7px;width:66px">Transparent</div>
<div class="a bgl" style="left:72px;width:66px">Solid Color</div>
<div class="a bgl" style="left:138px;width:66px">Image...</div>
<!--/SIDE-->
</body></html>
